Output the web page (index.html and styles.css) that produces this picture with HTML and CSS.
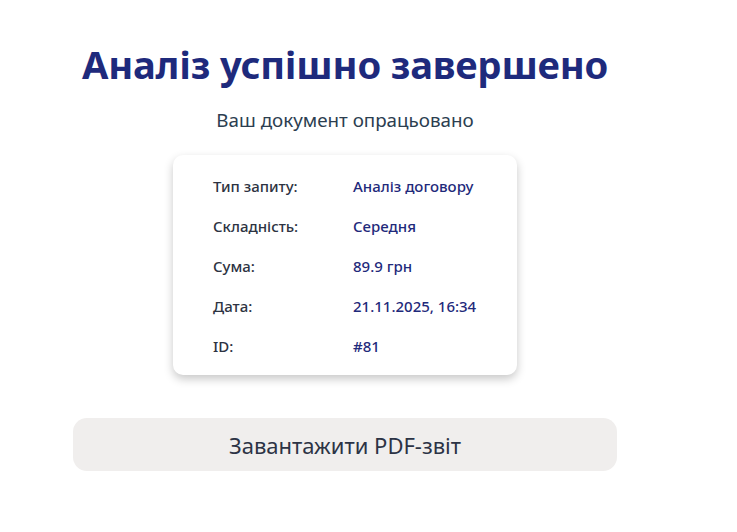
FILE: index.html
```html
<!DOCTYPE html>
<html lang="uk">
<head>
<meta charset="utf-8">
<title>Аналіз успішно завершено</title>
<link rel="stylesheet" href="styles.css">
</head>
<body>
<main class="result">
  <h1 class="result__title">Аналіз успішно завершено</h1>
  <p class="result__subtitle">Ваш документ опрацьовано</p>
  <section class="card">
    <div class="card__row"><span class="card__label">Тип запиту:</span><span class="card__value">Аналіз договору</span></div>
    <div class="card__row"><span class="card__label">Складність:</span><span class="card__value">Середня</span></div>
    <div class="card__row"><span class="card__label">Сума:</span><span class="card__value">89.9 грн</span></div>
    <div class="card__row"><span class="card__label">Дата:</span><span class="card__value">21.11.2025, 16:34</span></div>
    <div class="card__row"><span class="card__label">ID:</span><span class="card__value">#81</span></div>
  </section>
  <button class="download" type="button">Завантажити PDF-звіт</button>
</main>
</body>
</html>
```
FILE: styles.css
```css
* { box-sizing: border-box; }
html, body { margin: 0; padding: 0; background: #ffffff; }
body {
  font-family: "Noto Sans", "Open Sans", sans-serif;
  color: #2c3e50;
}
.result {
  width: 544px;
  margin-left: 73px;
  padding-top: 36px;
  display: flex;
  flex-direction: column;
  align-items: center;
}
.result__title {
  margin: 0;
  font-size: 38.2px;
  line-height: 56px;
  font-weight: 700;
  color: #1e2a7c;
  letter-spacing: -0.2px;
  white-space: nowrap;
}
.result__subtitle {
  margin: 16px 0 0;
  font-size: 18.8px;
  line-height: 24px;
  color: #2c3e50;
}
.card {
  margin-top: 23px;
  width: 344px;
  padding: 11px 40px 9px;
  background: #fff;
  border-radius: 10px;
  box-shadow: 0 4px 10px rgba(0, 0, 0, 0.22);
  display: flex;
  flex-direction: column;
}
.card__row {
  display: grid;
  grid-template-columns: 140px 1fr;
  height: 40px;
  align-items: center;
  font-size: 15px;
  font-weight: 500;
}
.card__label { color: #2d3342; }
.card__value { color: #1f2a7b; }
.download {
  margin-top: 43px;
  width: 544px;
  height: 53px;
  border: none;
  border-radius: 14px;
  background: #f0eeed;
  font-family: "Noto Sans", "Open Sans", sans-serif;
  font-size: 22px;
  color: #2c3345;
  cursor: pointer;
}
```
